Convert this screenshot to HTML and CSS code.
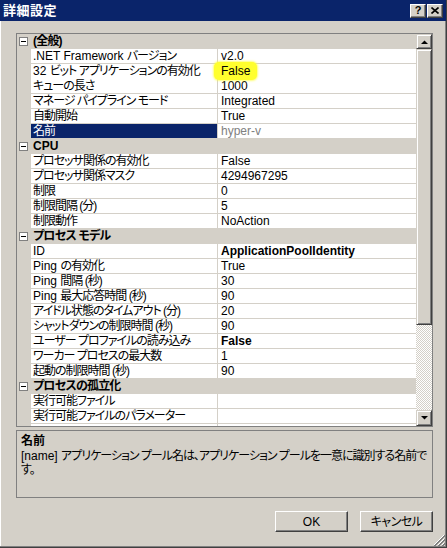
FILE: index.html
```html
<!DOCTYPE html>
<html lang="ja">
<head>
<meta charset="utf-8">
<title>詳細設定</title>
<link rel="stylesheet" href="styles.css">
</head>
<body>
<div class="window">
  <div class="titlebar">
    <span class="title">詳細設定</span>
    <div class="tbtns">
      <span class="tbtn help">?</span>
      <span class="tbtn close"><svg width="8" height="7" viewBox="0 0 8 7"><path d="M0.5 0.5 L7.5 6.5 M7.5 0.5 L0.5 6.5" stroke="#000" stroke-width="1.6"/></svg></span>
    </div>
  </div>
  <div class="main">
    <div class="grid">
      <div class="rows">
        <div class="row cat"><span class="margin"><span class="expander"></span></span><span class="cat-label">(全般)</span></div>
        <div class="row"><span class="margin"></span><span class="name"><span class="lat">.NET Framework </span>バージョン</span><span class="value">v2.0</span></div>
        <div class="row"><span class="margin"></span><span class="name"><span class="lat">32 </span>ビット アプリケーションの有効化</span><span class="value"><span class="hl">False</span></span></div>
        <div class="row"><span class="margin"></span><span class="name">キューの長さ</span><span class="value">1000</span></div>
        <div class="row"><span class="margin"></span><span class="name">マネージ パイプライン モード</span><span class="value">Integrated</span></div>
        <div class="row"><span class="margin"></span><span class="name">自動開始</span><span class="value">True</span></div>
        <div class="row selected"><span class="margin"></span><span class="name">名前</span><span class="value">hyper-v</span></div>
        <div class="row cat"><span class="margin"><span class="expander"></span></span><span class="cat-label"><span class="lat">CPU</span></span></div>
        <div class="row"><span class="margin"></span><span class="name">プロセッサ関係の有効化</span><span class="value">False</span></div>
        <div class="row"><span class="margin"></span><span class="name">プロセッサ関係マスク</span><span class="value">4294967295</span></div>
        <div class="row"><span class="margin"></span><span class="name">制限</span><span class="value">0</span></div>
        <div class="row"><span class="margin"></span><span class="name">制限間隔 (分)</span><span class="value">5</span></div>
        <div class="row"><span class="margin"></span><span class="name">制限動作</span><span class="value">NoAction</span></div>
        <div class="row cat"><span class="margin"><span class="expander"></span></span><span class="cat-label">プロセス モデル</span></div>
        <div class="row"><span class="margin"></span><span class="name"><span class="lat">ID</span></span><span class="value bold">ApplicationPoolIdentity</span></div>
        <div class="row"><span class="margin"></span><span class="name"><span class="lat">Ping </span>の有効化</span><span class="value">True</span></div>
        <div class="row"><span class="margin"></span><span class="name"><span class="lat">Ping </span>間隔 (秒)</span><span class="value">30</span></div>
        <div class="row"><span class="margin"></span><span class="name"><span class="lat">Ping </span>最大応答時間 (秒)</span><span class="value">90</span></div>
        <div class="row"><span class="margin"></span><span class="name">アイドル状態のタイムアウト (分)</span><span class="value">20</span></div>
        <div class="row"><span class="margin"></span><span class="name">シャットダウンの制限時間 (秒)</span><span class="value">90</span></div>
        <div class="row"><span class="margin"></span><span class="name">ユーザー プロファイルの読み込み</span><span class="value bold">False</span></div>
        <div class="row"><span class="margin"></span><span class="name">ワーカー プロセスの最大数</span><span class="value">1</span></div>
        <div class="row"><span class="margin"></span><span class="name">起動の制限時間 (秒)</span><span class="value">90</span></div>
        <div class="row cat"><span class="margin"><span class="expander"></span></span><span class="cat-label">プロセスの孤立化</span></div>
        <div class="row"><span class="margin"></span><span class="name">実行可能ファイル</span><span class="value"></span></div>
        <div class="row"><span class="margin"></span><span class="name">実行可能ファイルのパラメーター</span><span class="value"></span></div>
        <div class="row last"><span class="margin"></span><span class="name"></span><span class="value"></span></div>
      </div>
      <div class="scrollbar">
        <span class="sb-btn up"><svg width="7" height="4" viewBox="0 0 7 4"><polygon points="0,4 7,4 3.5,0.5" fill="#000"/></svg></span>
        <span class="sb-thumb"></span>
        <span class="sb-track"></span>
        <span class="sb-btn down"><svg width="7" height="4" viewBox="0 0 7 4"><polygon points="0,0 7,0 3.5,3.5" fill="#000"/></svg></span>
      </div>
    </div>
    <div class="desc">
      <div class="desc-title">名前</div>
      <div class="desc-text"><span class="lat">[name] </span>アプリケーション プール名は、アプリケーション プールを一意に識別する名前で<br>す。</div>
    </div>
    <div class="buttons">
      <span class="btn"><span class="lat">OK</span></span>
      <span class="btn">キャンセル</span>
    </div>
  </div>
  <svg class="grip" width="12" height="12" viewBox="0 0 12 12">
    <path d="M11 1 L1 11 M11 5 L5 11 M11 9 L9 11" stroke="#fff" stroke-width="1"/>
    <path d="M12 1 L1 12 M12 2 L2 12 M12 5 L5 12 M12 6 L6 12 M12 9 L9 12 M12 10 L10 12" stroke="#808080" stroke-width="1"/>
  </svg>
</div>
</body>
</html>
```

FILE: styles.css
```css
* { box-sizing: border-box; }

html, body {
  margin: 0;
  padding: 0;
  background: #d4d0c8;
}

body {
  font-family: "Liberation Sans", "Noto Sans CJK JP", sans-serif;
  font-size: 12px;
  font-feature-settings: "palt";
  color: #000;
}

.lat {
  letter-spacing: 0;
}

.window {
  position: relative;
  width: 447px;
  height: 548px;
  background: #d4d0c8;
  border-right: 1px solid #404040;
  border-bottom: 1px solid #404040;
  box-shadow: inset -1px -1px 0 #808080, inset 1px 0 0 #fff;
  display: flex;
  flex-direction: column;
  overflow: hidden;
}

.titlebar {
  height: 21px;
  background: #0a246a;
  display: flex;
  align-items: center;
  justify-content: space-between;
  padding: 0 3px 0 3px;
}

.title {
  color: #fff;
  font-weight: bold;
  font-size: 13px;
  line-height: 15px;
  letter-spacing: 0.5px;
}

.tbtns {
  display: flex;
  gap: 1px;
}

.tbtn {
  width: 16px;
  height: 14px;
  background: #d4d0c8;
  border-top: 1px solid #fff;
  border-left: 1px solid #fff;
  border-right: 1px solid #404040;
  border-bottom: 1px solid #404040;
  box-shadow: inset -1px -1px 0 #808080;
  display: flex;
  align-items: center;
  justify-content: center;
}

.help {
  font-weight: bold;
  font-size: 11px;
  line-height: 11px;
  padding-bottom: 1px;
}

.main {
  flex: 1;
  display: flex;
  flex-direction: column;
  padding: 12px 13px 0 16px;
}

.grid {
  height: 394px;
  border: 1px solid #808080;
  display: flex;
  background: #d4d0c8;
}

.rows {
  flex: 1;
  overflow: hidden;
  display: flex;
  flex-direction: column;
}

.row {
  flex: none;
  height: 15px;
  display: grid;
  grid-template-columns: 14px 186px 199px;
  line-height: 14px;
}

.row.last {
  height: 2px;
}

.margin {
  background: #d4d0c8;
  display: flex;
  align-items: center;
  padding-left: 2px;
}

.name {
  background: #fff;
  border-bottom: 1px solid #d4d0c8;
  padding-left: 2px;
  white-space: nowrap;
  overflow: hidden;
  letter-spacing: -1px;
}

.value {
  background: #fff;
  border-left: 1px solid #d4d0c8;
  border-bottom: 1px solid #d4d0c8;
  padding-left: 3px;
  white-space: nowrap;
}

.row.last .name, .row.last .value {
  border-bottom: 0;
}

.bold { font-weight: bold; }

.hl {
  position: relative;
  z-index: 1;
  display: inline-block;
  background: #ffff2e;
  margin-left: -7px;
  padding: 2px 7px 2px 7px;
  margin-top: -2px;
  line-height: 14px;
  border-radius: 5px;
  box-shadow: 0 0 2px 1px rgba(255, 255, 60, 0.7);
}

.selected .name {
  background: #0a246a;
  color: #fff;
}

.selected .value {
  color: #808080;
}

.cat {
  grid-template-columns: 14px 1fr;
  background: #d4d0c8;
}

.cat-label {
  font-weight: bold;
  padding-left: 2px;
  line-height: 15px;
  white-space: nowrap;
  letter-spacing: -0.8px;
}

.expander {
  width: 9px;
  height: 9px;
  border: 1px solid #808080;
  background: linear-gradient(#000, #000) center / 5px 1px no-repeat, #fff;
}

.scrollbar {
  width: 16px;
  display: flex;
  flex-direction: column;
}

.sb-btn, .sb-thumb {
  background: #d4d0c8;
  border-top: 1px solid #d4d0c8;
  border-left: 1px solid #d4d0c8;
  border-right: 1px solid #404040;
  border-bottom: 1px solid #404040;
  box-shadow: inset 1px 1px 0 #fff, inset -1px -1px 0 #808080;
}

.sb-btn {
  flex: none;
  display: flex;
  align-items: center;
  justify-content: center;
}

.sb-btn.up { height: 15px; }
.sb-btn.down { height: 16px; }

.sb-thumb {
  flex: none;
  height: 276px;
}

.sb-track {
  flex: 1;
  background-color: #fff;
  background-image: conic-gradient(#d4d0c8 25%, #fff 0 50%, #d4d0c8 0 75%, #fff 0);
  background-size: 2px 2px;
}

.desc {
  margin-top: 3px;
  height: 68px;
  border: 1px solid #808080;
  padding: 3px 4px;
  line-height: 14px;
}

.desc-title {
  font-weight: bold;
  margin-bottom: 1px;
}

.desc-text {
  white-space: nowrap;
  letter-spacing: -1px;
}

.buttons {
  margin-top: 13px;
  display: flex;
  justify-content: flex-end;
  gap: 12px;
}

.btn {
  width: 73px;
  height: 21px;
  background: #d4d0c8;
  border-top: 1px solid #fff;
  border-left: 1px solid #fff;
  border-right: 1px solid #404040;
  border-bottom: 1px solid #404040;
  box-shadow: inset -1px -1px 0 #808080;
  display: flex;
  align-items: center;
  justify-content: center;
  line-height: 14px;
  letter-spacing: -0.5px;
}

.grip {
  position: absolute;
  right: 1px;
  bottom: 1px;
}
```
